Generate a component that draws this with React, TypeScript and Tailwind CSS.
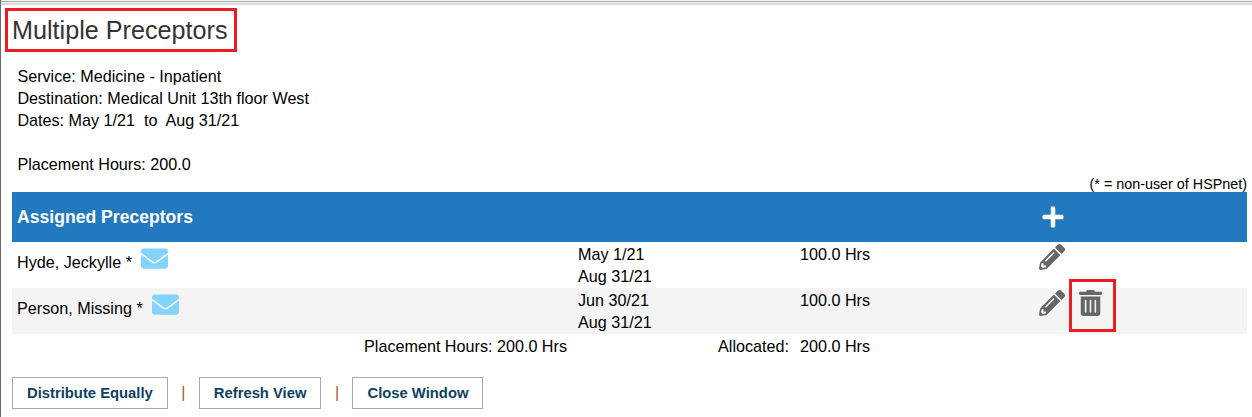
import React from 'react'
import { FaEnvelope, FaPencilAlt, FaPlus, FaTrashAlt } from 'react-icons/fa'

interface Preceptor {
  name: string
  start: string
  end: string
  hours: string
  removable: boolean
}

const preceptors: Preceptor[] = [
  {
    name: 'Hyde, Jeckylle *',
    start: 'May 1/21',
    end: 'Aug 31/21',
    hours: '100.0 Hrs',
    removable: false,
  },
  {
    name: 'Person, Missing *',
    start: 'Jun 30/21',
    end: 'Aug 31/21',
    hours: '100.0 Hrs',
    removable: true,
  },
]

const actions = ['Distribute Equally', 'Refresh View', 'Close Window']

const PreceptorRow: React.FC<{ preceptor: Preceptor }> = ({ preceptor }) => (
  <div className="flex h-[46px] pl-[5px] even:bg-[#f4f4f4]">
    <div className="flex w-[561px] items-start">
      <span className="pt-[9px]">{preceptor.name}</span>
      <FaEnvelope className="mt-[2.5px] ml-[9px] size-[27px] text-[#82d4fc]" />
    </div>
    <div className="w-[222px] pt-px">
      <div>{preceptor.start}</div>
      <div>{preceptor.end}</div>
    </div>
    <div className="w-[239px] pt-px">{preceptor.hours}</div>
    <div className="flex pt-px text-[#666]">
      <button aria-label="Edit" className="mt-px h-[26px]">
        <FaPencilAlt className="size-[26px]" />
      </button>
      {preceptor.removable && (
        <button
          aria-label="Delete"
          className="-mt-[10px] ml-1 flex h-[53px] w-[47px] justify-center border-3 border-[#ed1c24] pt-2 pr-1"
        >
          <FaTrashAlt className="h-[26px] w-[23px]" />
        </button>
      )}
    </div>
  </div>
)

export default function App() {
  return (
    <div className="h-[417px] overflow-hidden border-l border-l-[#6b6b6b] bg-white font-['Liberation_Sans',Arial,sans-serif] text-[16.17px] leading-[22px] text-black">
      {/* Window edge */}
      <div className="h-px bg-[#f0f0f0]" />
      <div className="h-px bg-[#a8abad]" />
      <div className="h-px bg-[#f0f0f0]" />
      <div className="h-[2px] bg-[#d8d8d8]" />

      <div className="pr-[5px] pl-[11px]">
        <h1 className="mt-[3px] -ml-[7px] flex h-11 w-[232px] items-center border-3 border-[#ed1c24] pl-1 text-[25.2px] whitespace-nowrap text-[#333]">
          Multiple Preceptors
        </h1>

        {/* Placement summary */}
        <div className="mt-[13px] pb-px pl-[5.4px]">
          <p>Service: Medicine - Inpatient</p>
          <p>Destination: Medical Unit 13th floor West</p>
          <p className="whitespace-pre">{'Dates: May 1/21  to  Aug 31/21'}</p>
          <p className="mt-[22px]">Placement Hours: 200.0</p>
        </div>
        <p className="h-4 text-right text-[14.35px] leading-4">
          (* = non-user of HSPnet)
        </p>

        {/* Assigned preceptors */}
        <div className="flex h-[50px] items-center bg-[#2279bd] pl-[5px] text-white">
          <h2 className="w-[1024px] text-[17.6px] font-bold">
            Assigned Preceptors
          </h2>
          <button aria-label="Add">
            <FaPlus className="size-6" />
          </button>
        </div>
        <div>
          {preceptors.map(preceptor => (
            <PreceptorRow key={preceptor.name} preceptor={preceptor} />
          ))}
        </div>
        <div className="flex h-[43px] pt-px">
          <div className="w-[555px] text-right">Placement Hours: 200.0 Hrs</div>
          <div className="w-[222px] text-right">Allocated:</div>
          <div className="pl-[11px]">200.0 Hrs</div>
        </div>

        {/* Actions */}
        <div className="flex items-center">
          {actions.map((action, index) => (
            <React.Fragment key={action}>
              {index > 0 && (
                <span className="w-[31px] pb-px text-center text-base text-[#a85a14]">
                  |
                </span>
              )}
              <button className="h-8 border border-[#a9a9a9] px-[14px] text-[14.8px] font-bold whitespace-nowrap text-[#0d4261]">
                {action}
              </button>
            </React.Fragment>
          ))}
        </div>
      </div>
    </div>
  )
}
